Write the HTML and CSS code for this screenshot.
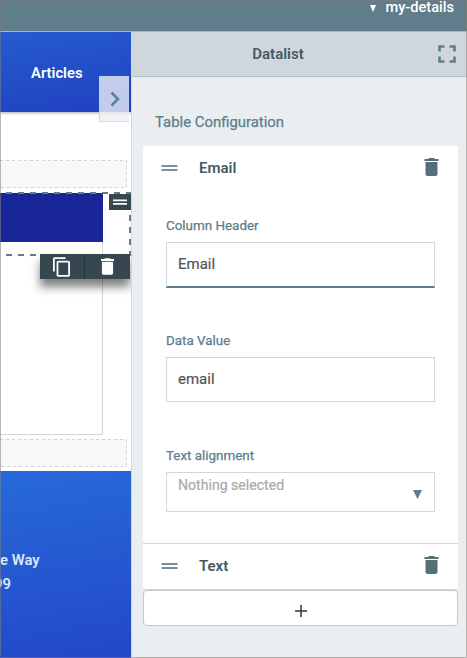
FILE: index.html
```html
<!DOCTYPE html>
<html lang="en">
<head>
<meta charset="utf-8">
<title>Datalist</title>
<link rel="stylesheet" href="styles.css">
</head>
<body>
<svg class="defs" aria-hidden="true">
  <symbol id="trash" viewBox="5 3 14 18"><path d="M6 19c0 1.1.9 2 2 2h8c1.100 0 2-.9 2-2V7H6v12zM19 4h-3.500l-1-1h-5l-1 1H5v2h14V4z"/></symbol>
  <symbol id="grip" viewBox="0 0 16 6"><path d="M0 0h16v2H0zM0 4h16v2H0z"/></symbol>
</svg>
<div class="app">
  <header class="topbar"><svg class="tri" viewBox="0 0 6 7"><path d="M0 0h6L3 7z"/></svg><span>my-details</span></header>
  <div class="workspace">
    <main class="canvas">
      <nav class="site-nav"><span>Articles</span>
        <button class="collapse" aria-label="Collapse"><svg viewBox="0 0 10 16"><path d="M1.500 1.500L8 8l-6.500 6.500"/></svg></button>
      </nav>
      <svg class="slot slot-top" viewBox="0 0 127 28"><path d="M0 .5H126.500V27.500H0"/></svg>
      <section class="table">
        <div class="table-head"></div>
        <svg class="outline" viewBox="0 0 131 64"><path d="M-6 1H131M130 -1V64M-6 63H131"/></svg>
        <div class="handle"><svg viewBox="0 0 14 6"><use href="#grip" width="14" height="6"/></svg></div>
        <div class="tools">
          <button aria-label="Copy"><svg class="copy" viewBox="2 1 19 22"><path d="M16 1H4c-1.100 0-2 .9-2 2v14h2V3h12V1zm3 4H8c-1.100 0-2 .9-2 2v14c0 1.100.9 2 2 2h11c1.100 0 2-.9 2-2V7c0-1.100-.9-2-2-2zm0 16H8V7h11v14z"/></svg></button>
          <button aria-label="Delete"><svg class="bin"><use href="#trash"/></svg></button>
        </div>
      </section>
      <svg class="slot slot-bottom" viewBox="0 0 127 28"><path d="M0 .5H126.500V27.500H0"/></svg>
      <footer class="site-footer"><div>e Way</div><div class="zip">99</div></footer>
    </main>
    <aside class="panel">
      <header class="panel-head"><h1>Datalist</h1>
        <svg class="expand" viewBox="0 0 18 18"><path d="M1.500 6.500V1.500H6.500M11.500 1.500h5V6.500M16.500 11.500v5H11.500M6.500 16.500H1.500V11.500"/></svg>
      </header>
      <h2>Table Configuration</h2>
      <div class="card">
        <div class="row"><svg class="grip"><use href="#grip"/></svg><b>Email</b><svg class="trash"><use href="#trash"/></svg></div>
        <div class="fields">
          <label>Column Header</label><div class="input active">Email</div>
          <label>Data Value</label><div class="input">email</div>
          <label>Text alignment</label><div class="input select"><span>Nothing selected</span><svg viewBox="0 0 9 9"><path d="M0 0h9L4.500 9z"/></svg></div>
        </div>
        <div class="row second"><svg class="grip"><use href="#grip"/></svg><b>Text</b><svg class="trash"><use href="#trash"/></svg></div>
      </div>
      <button class="add" aria-label="Add"><svg viewBox="0 0 12 12"><path d="M6 0v12M0 6h12"/></svg></button>
    </aside>
  </div>
</div>
</body>
</html>
```

FILE: styles.css
```css
* { box-sizing: border-box; }
body { margin: 0; font-family: Roboto, sans-serif; font-size: 15px; font-weight: 500; color: #455a64; overflow: hidden; }
button { padding: 0; border: 0; font: inherit; }
svg { display: block; flex: none; }
.defs { position: absolute; width: 0; height: 0; }
.app { position: relative; width: 467px; height: 658px; display: flex; flex-direction: column; }
.app::after { content: ""; position: absolute; inset: 0; border: 1px solid rgba(125, 125, 125, .55); pointer-events: none; z-index: 9; }
.topbar { height: 32px; flex: none; background: #607d8b; border-bottom: 1px solid #aab4b9; color: #fff; display: flex; justify-content: flex-end; padding-right: 13px; line-height: 15px; font-size: 14.6px; }
.tri { width: 6px; height: 7px; fill: #fff; margin: 5px 9px 0 0; }
.workspace { flex: 1; display: flex; }
.canvas { width: 131px; flex: none; background: #fff; display: flex; flex-direction: column; overflow: hidden; }
.site-nav { position: relative; z-index: 1; height: 80px; flex: none; background: linear-gradient(170deg, #255bd0, #2141c0); box-shadow: 0 1px 3px rgba(0, 0, 0, .35); color: #fff; font-size: 14.8px; font-weight: 600; line-height: 18px; padding: 32px 0 0 31px; }
.collapse { position: absolute; left: 99px; top: 44px; width: 30px; height: 46px; background: rgba(236, 239, 244, .8); border: 1px solid rgba(195, 204, 220, .6); border-right: 0; }
.collapse svg { width: 10px; height: 16px; margin: 0 0 0 10px; fill: none; stroke: #5c7fa8; stroke-width: 2.600; }
.slot { width: 127px; height: 28px; flex: none; background: #f8f8f8; fill: none; stroke: #d2d2d2; stroke-dasharray: 3 3; }
.slot-top { margin-top: 48px; }
.table { position: relative; height: 242px; width: 103px; margin-top: 5px; border: solid #d5d5d5; border-width: 0 1px 1px 0; }
.table-head { width: 103px; height: 49px; background: #192699; }
.outline { position: absolute; left: 0; top: -1px; width: 131px; height: 64px; fill: none; stroke: #607d8b; stroke-width: 2; stroke-dasharray: 6 6; }
.handle { position: absolute; left: 109px; top: 1px; width: 22px; height: 16px; background: #37474f; display: flex; align-items: center; justify-content: center; fill: #fff; }
.handle svg { width: 14px; height: 6px; }
.tools { position: absolute; left: 40px; top: 61px; width: 90px; height: 25px; display: flex; background: #37474f; box-shadow: 0 8px 10px rgba(0, 0, 0, .5); }
.tools button { width: 45px; display: flex; align-items: center; justify-content: center; background: none; fill: #fff; }
.tools button:first-child { border-right: 1px solid #26343b; }
.copy { width: 17px; height: 20px; margin-right: 2px; }
.bin { width: 13px; height: 17px; }
.slot-bottom { margin-top: 4px; }
.site-footer { flex: 1; margin-top: 4px; padding-top: 77px; background: linear-gradient(170deg, #276ada, #234bc9 90%); color: #dce8fb; font-size: 14.8px; font-weight: 600; line-height: 24px; }
.zip { margin-left: -6px; }
.panel { flex: 1; background: #eaeef1; border-left: 1px solid #cfd8dc; }
.panel-head { position: relative; height: 45px; background: #cfd7dd; border-bottom: 1px solid #b0bec5; display: flex; align-items: center; justify-content: center; padding-right: 43px; }
h1 { margin: 0; font-size: 15px; font-weight: 600; line-height: 18px; }
.expand { position: absolute; right: 11px; top: 13px; width: 18px; height: 18px; fill: none; stroke: #607d8b; stroke-width: 2.600; }
h2 { margin: 36px 0 15px 23px; font-size: 14.9px; font-weight: 400; -webkit-text-stroke: .25px; line-height: 18px; color: #607d8b; }
.card { margin: 0 8px 0 11px; width: 315px; height: 444px; background: #fff; border-bottom: 1px solid #cfd8dc; }
.row { height: 43px; display: flex; align-items: center; padding: 0 19px 0 18px; }
.row b { font-weight: 600; flex: 1; margin-left: 21px; }
.grip { width: 17px; height: 6px; fill: #78909c; }
.trash { width: 15px; height: 18px; fill: #546e7a; position: relative; top: -1px; }
.fields { height: 354px; padding: 28px 23px 0; }
label { display: block; font-size: 13.4px; font-weight: 400; -webkit-text-stroke: .25px; line-height: 17px; color: #607d8b; margin-bottom: 8px; }
.input { height: 45px; border: 1px solid #cfd8dc; padding: 0 11px; line-height: 43px; margin-bottom: 45px; color: #555; font-weight: 400; -webkit-text-stroke: .2px; }
.active { height: 46px; border-bottom: 2px solid #607d8b; margin-bottom: 44px; }
.select { height: 40px; display: flex; justify-content: space-between; font-size: 14.1px; line-height: 24px; color: #aaa; margin: 0; }
.select svg { width: 9px; height: 9px; fill: #607d8b; margin: 17px 1px 0 0; }
.second { height: 44px; border-top: 1px solid #cfd8dc; }
.add { margin-left: 11px; width: 315px; height: 36px; background: #fff; border: 1px solid #c8c8c8; border-radius: 4px; display: flex; align-items: center; justify-content: center; }
.add svg { width: 12px; height: 12px; fill: none; stroke: #333; stroke-width: 1.500; margin-top: 6px; }
```
